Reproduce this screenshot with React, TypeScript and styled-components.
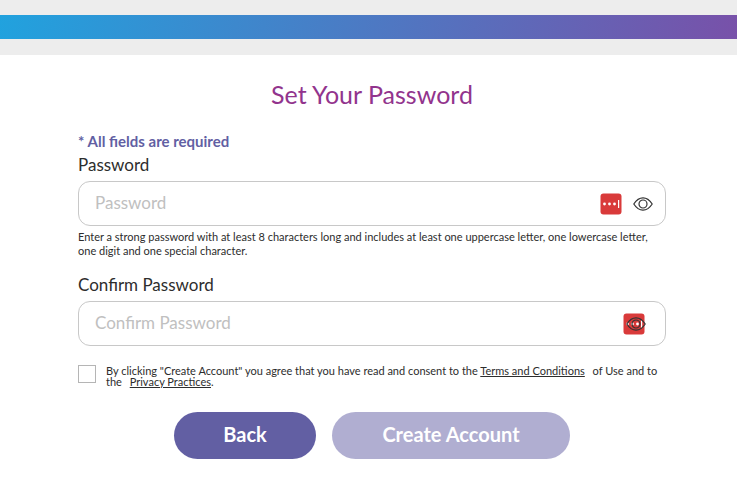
import React, { useState } from "react";
import styled, { createGlobalStyle } from "styled-components";

const GlobalStyle = createGlobalStyle`
  *, *::before, *::after { box-sizing: border-box; }
  body {
    margin: 0;
    background: #fff;
    color: #2d2d2d;
    font-family: Lato, "Open Sans", sans-serif;
  }
`;

const Banner = styled.header`
  padding: 15px 0 16px;
  background: #ededed;
`;

const Stripe = styled.div`
  height: 24px;
  background: linear-gradient(100deg, #21a2de, #7851a9);
`;

const Form = styled.form`
  display: flex;
  flex-direction: column;
  padding: 23px 71px 23px 78px;
`;

const Title = styled.h1`
  margin: 0 0 22px;
  color: #92348d;
  font-size: 25px;
  font-weight: 400;
  line-height: 32px;
  text-align: center;
`;

const Required = styled.p`
  margin: 0 0 2px;
  color: #625fa3;
  font-size: 15px;
  font-weight: 700;
  line-height: 18px;
`;

const Label = styled.label`
  margin: 2px 0 5px;
  font-size: 17px;
  line-height: 22px;
`;

const Field = styled.div`
  position: relative;
  display: flex;
`;

const TextBox = styled.input`
  flex: 1;
  min-width: 0;
  height: 45px;
  padding: 0 72px 3px 16px;
  border: 1px solid #c8c8c8;
  border-radius: 12px;
  background: #fff;
  color: inherit;
  font: inherit;
  font-size: 17px;
  &::placeholder { color: #c0c0c0; opacity: 1; }
`;

const IconButton = styled.button<{ $right: number }>`
  position: absolute;
  top: 50%;
  right: ${(p) => p.$right}px;
  display: flex;
  padding: 0;
  border: 0;
  background: none;
  color: #333;
  transform: translateY(-50%);
  cursor: pointer;
`;

const Hint = styled.p`
  margin: 4px 0 14px;
  font-size: 11px;
  line-height: 14px;
`;

const Consent = styled.div`
  display: flex;
  align-items: flex-start;
  gap: 10px;
  margin: 19px 0 25px;
  font-size: 11px;
  line-height: 11px;
`;

const CheckBox = styled.input`
  flex: none;
  appearance: none;
  width: 18px;
  height: 18px;
  margin: 0;
  border: 1px solid #b5b5b5;
  background: #fff;
  &:checked { background: #625fa3; box-shadow: inset 0 0 0 3px #fff; }
`;

const ConsentText = styled.label`
  flex: 1;
`;

const TextLink = styled.a<{ $before?: number; $after?: number }>`
  margin-left: ${(p) => p.$before ?? 0}px;
  margin-right: ${(p) => p.$after ?? 0}px;
  color: inherit;
  text-underline-offset: 1px;
`;

const Actions = styled.div`
  display: flex;
  justify-content: center;
  gap: 16px;
`;

const Pill = styled.button<{ $wide?: boolean }>`
  width: ${(p) => (p.$wide ? 238 : 142)}px;
  height: 47px;
  padding: 0 0 3px;
  border: 0;
  border-radius: 24px;
  background: #625fa3;
  color: #fff;
  font: inherit;
  font-size: 20px;
  font-weight: 700;
  cursor: pointer;
  &:disabled { background: #b0aed1; cursor: default; }
`;

const EyeIcon = () => (
  <svg width="20" height="14" viewBox="0 0 20 14" fill="none" stroke="currentColor" aria-hidden="true">
    <path strokeWidth="1.200" d="M.8 7C3.500 2.800 6.500.8 10 .8s6.500 2 9.200 6.200C16.500 11.200 13.500 13.200 10 13.200S3.500 11.200 .8 7Z" />
    <circle strokeWidth="1.200" cx="10" cy="7" r="4" />
  </svg>
);

const ManagerIcon = () => (
  <svg width="22" height="22" viewBox="0 0 22 22" aria-hidden="true">
    <rect x=".5" y=".5" width="21" height="21" rx="3" fill="#d93a3a" />
    <g fill="#fff">
      <circle cx="4.500" cy="11" r="1.400" />
      <circle cx="9.500" cy="11" r="1.400" />
      <circle cx="14.500" cy="11" r="1.400" />
      <rect x="18" y="7" width="1.200" height="8" />
    </g>
  </svg>
);

interface PasswordFieldProps {
  id: string;
  label: string;
  managerRight: number;
  eyeRight: number;
}

function PasswordField({ id, label, managerRight, eyeRight }: PasswordFieldProps) {
  const [visible, setVisible] = useState(false);
  return (
    <>
      <Label htmlFor={id}>{label}</Label>
      <Field>
        <TextBox id={id} type={visible ? "text" : "password"} placeholder={label} autoComplete="new-password" />
        <IconButton type="button" $right={managerRight} aria-label="Fill from password manager">
          <ManagerIcon />
        </IconButton>
        <IconButton
          type="button"
          $right={eyeRight}
          aria-label={visible ? "Hide password" : "Show password"}
          onClick={() => setVisible(!visible)}
        >
          <EyeIcon />
        </IconButton>
      </Field>
    </>
  );
}

export default function App() {
  return (
    <>
      <GlobalStyle />
      <Banner>
        <Stripe />
      </Banner>
      <main>
        <Form onSubmit={(e) => e.preventDefault()}>
          <Title>Set Your Password</Title>
          <Required>* All fields are required</Required>
          <PasswordField id="password" label="Password" managerRight={44} eyeRight={13} />
          <Hint>
            Enter a strong password with at least 8 characters long and includes at least one uppercase letter, one
            lowercase letter, one digit and one special character.
          </Hint>
          <PasswordField id="confirm" label="Confirm Password" managerRight={21} eyeRight={20} />
          <Consent>
            <CheckBox id="consent" type="checkbox" />
            <ConsentText htmlFor="consent">
              By clicking "Create Account" you agree that you have read and consent to the{" "}
              <TextLink href="#terms" $after={5}>Terms and Conditions</TextLink> of Use and to the{" "}
              <TextLink href="#privacy" $before={5}>Privacy Practices</TextLink>.
            </ConsentText>
          </Consent>
          <Actions>
            <Pill type="button">Back</Pill>
            <Pill type="submit" $wide disabled>Create Account</Pill>
          </Actions>
        </Form>
      </main>
    </>
  );
}
